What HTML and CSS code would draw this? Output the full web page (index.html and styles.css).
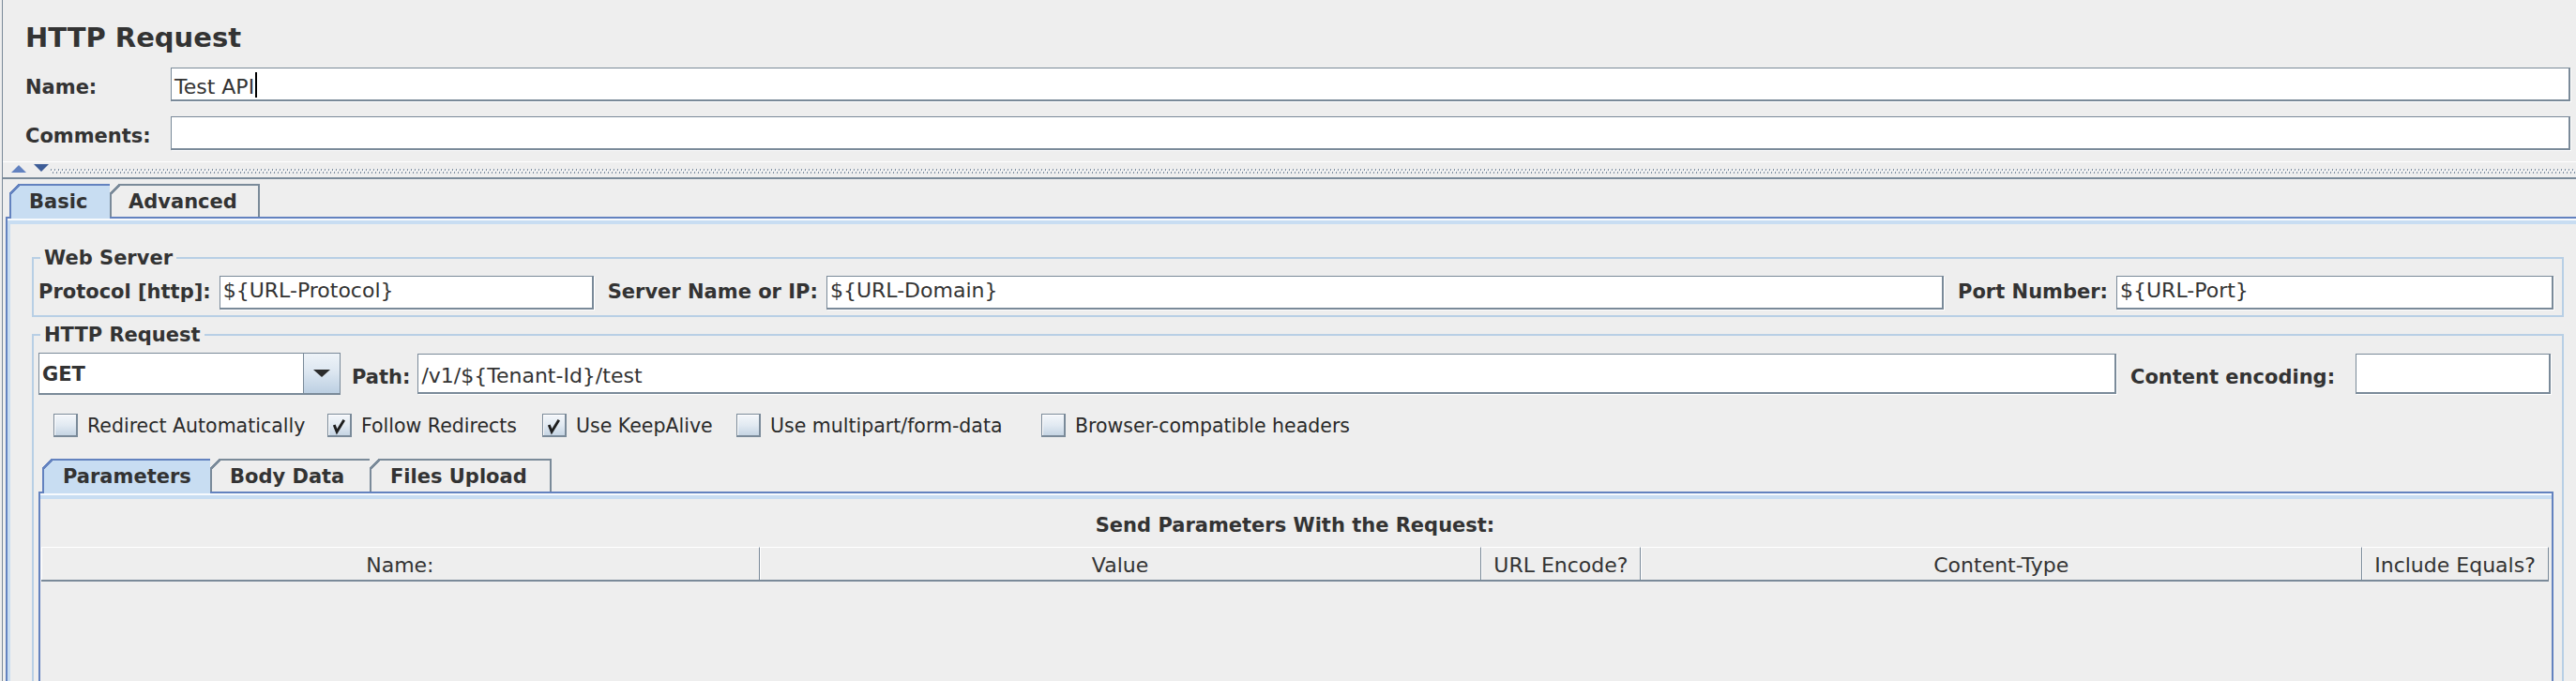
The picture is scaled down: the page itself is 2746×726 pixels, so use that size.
FILE: index.html
```html
<!DOCTYPE html>
<html>
<head>
<meta charset="utf-8">
<title>HTTP Request</title>
<link rel="stylesheet" href="styles.css">
</head>
<body>
<div class="page">
  <header class="head">
    <h1 class="title">HTTP Request</h1>
    <div class="form-row first">
      <span class="row-label">Name:</span>
      <div class="field name-field grow">Test API<span class="caret"></span></div>
    </div>
    <div class="form-row">
      <span class="row-label">Comments:</span>
      <div class="field name-field grow"></div>
    </div>
  </header>

  <div class="splitter">
    <span class="arrow-up"></span>
    <span class="arrow-down"></span>
    <span class="bumps"></span>
  </div>

  <div class="tabs outer-tabs">
    <div class="tab-strip">
      <div class="tab selected w-basic">Basic</div>
      <div class="tab w-advanced">Advanced</div>
    </div>
    <div class="tab-body outer-body">
      <fieldset class="group">
        <legend>Web Server</legend>
        <div class="grow-row ws-row">
          <span class="glabel">Protocol [http]:</span>
          <div class="field f-proto">${URL-Protocol}</div>
          <span class="glabel">Server Name or IP:</span>
          <div class="field grow">${URL-Domain}</div>
          <span class="glabel">Port Number:</span>
          <div class="field f-port">${URL-Port}</div>
        </div>
      </fieldset>

      <fieldset class="group tall">
        <legend>HTTP Request</legend>
        <div class="grow-row req-row">
          <div class="combo">
            <div class="combo-value">GET</div>
            <div class="combo-btn"><span class="combo-arrow"></span></div>
          </div>
          <span class="glabel path-label">Path:</span>
          <div class="field tall-field grow">/v1/${Tenant-Id}/test</div>
          <span class="glabel enc-label">Content encoding:</span>
          <div class="field tall-field f-enc"></div>
        </div>

        <div class="checks">
          <label class="check"><span class="box"></span><span class="ctext c-redirect">Redirect Automatically</span></label>
          <label class="check"><span class="box"><svg class="tick" viewBox="0 0 24 23" width="24" height="23"><path d="M6.5 11 L9.5 18.5 L17.5 5.5"/></svg></span><span class="ctext c-follow">Follow Redirects</span></label>
          <label class="check"><span class="box"><svg class="tick" viewBox="0 0 24 23" width="24" height="23"><path d="M6.5 11 L9.5 18.5 L17.5 5.5"/></svg></span><span class="ctext c-keep">Use KeepAlive</span></label>
          <label class="check"><span class="box"></span><span class="ctext c-multi">Use multipart/form-data</span></label>
          <label class="check"><span class="box"></span><span class="ctext c-browser">Browser-compatible headers</span></label>
        </div>

        <div class="tabs inner-tabs">
          <div class="tab-strip">
            <div class="tab selected w-params">Parameters</div>
            <div class="tab w-body">Body Data</div>
            <div class="tab w-files">Files Upload</div>
          </div>
          <div class="tab-body inner-body">
            <div class="params-title">Send Parameters With the Request:</div>
            <div class="param-head">
              <div>Name:</div>
              <div>Value</div>
              <div>URL Encode?</div>
              <div>Content-Type</div>
              <div>Include Equals?</div>
            </div>
          </div>
        </div>
      </fieldset>
    </div>
  </div>
</div>
</body>
</html>
```
FILE: styles.css
```css
* { box-sizing: border-box; }
html, body { margin: 0; padding: 0; }
body {
  width: 2746px;
  height: 726px;
  overflow: hidden;
  background: #eeeeee;
  font-family: "DejaVu Sans", "Liberation Sans", sans-serif;
  color: #333333;
}
.page {
  margin-left: 2px;
  border-left: 1px solid #7a8a99;
  height: 726px;
  overflow: hidden;
}

/* header */
.head { padding: 0 6px 0 24px; }
.title {
  margin: 0;
  padding-top: 23px;
  font-size: 29px;
  line-height: 34px;
  font-weight: bold;
}
.form-row { display: flex; align-items: center; margin-top: 16px; }
.form-row.first { margin-top: 15px; }
.row-label {
  width: 155px;
  flex: none;
  font-size: 21px;
  font-weight: bold;
  line-height: 22px;
  padding-top: 6px;
}

/* text fields */
.field {
  height: 36px;
  background: #ffffff;
  border-style: solid;
  border-color: #7a8a99;
  border-width: 1px 2px 2px 1px;
  box-shadow: 1px 1px 0 #ffffff;
  padding: 0 0 0 3px;
  font-size: 22px;
  line-height: 29px;
  white-space: nowrap;
  overflow: hidden;
  flex: none;
}
.name-field { padding-top: 4px; }
.grow { flex: 1 1 auto; min-width: 0; }
.caret {
  display: inline-block;
  width: 0;
  height: 27px;
  border-left: 2px solid #000;
  vertical-align: -4px;
  margin-left: 1px;
}

/* splitter */
.splitter {
  display: flex;
  align-items: flex-start;
  margin-top: 12px;
  height: 19px;
  border-top: 1px solid #ffffff;
  border-bottom: 2px solid #7a8a99;
  padding-top: 2px;
}
.arrow-up {
  margin-left: 9px;
  width: 0; height: 0;
  border-left: 8px solid transparent;
  border-right: 8px solid transparent;
  border-bottom: 8px solid #6282c0;
  margin-top: 1px;
}
.arrow-down {
  margin-left: 8px;
  width: 0; height: 0;
  border-left: 8px solid transparent;
  border-right: 8px solid transparent;
  border-top: 8px solid #3e5d97;
}
.bumps {
  flex: 1;
  height: 6px;
  margin: 5px 0 0 2px;
  background-image:
    linear-gradient(90deg, #7f90a3 0 1px, transparent 1px),
    linear-gradient(90deg, #7f90a3 0 1px, transparent 1px),
    linear-gradient(90deg, #ffffff 0 1px, transparent 1px);
  background-size: 4px 2px, 4px 2px, 4px 2px;
  background-position: 0 0, 2px 3px, 1px 1px;
  background-repeat: repeat-x;
}

/* tabs */
.outer-tabs { margin: 5px 0 0 3px; }
.tab-strip {
  display: flex;
  align-items: flex-start;
  height: 35px;
  padding-left: 4px;
}
.tab {
  position: relative;
  height: 35px;
  border-style: solid;
  border-color: #7a8a99;
  border-width: 2px 0 0 2px;
  padding: 1px 0 0 19px;
  font-size: 21px;
  font-weight: bold;
  line-height: 32px;
  white-space: nowrap;
  flex: none;
}
.tab:last-child { border-right-width: 2px; }
.tab::before {
  content: "";
  position: absolute;
  top: -2px;
  left: -2px;
  width: 11px;
  height: 11px;
  background: linear-gradient(to bottom right, #eeeeee 0 44%, #7a8a99 44% 60%, transparent 60%);
}
.tab.selected {
  background: #c8ddf2;
  border-color: #6382bf;
  height: 37px;
  z-index: 1;
}
.tab.selected::before {
  background: linear-gradient(to bottom right, #eeeeee 0 44%, #6382bf 44% 60%, transparent 60%);
}
.w-basic { width: 107px; padding-left: 19px; }
.w-advanced { width: 160px; padding-left: 18px; }
.w-params { width: 179px; padding-left: 20px; }
.w-body { width: 170px; padding-left: 19px; }
.w-files { width: 194px; padding-left: 20px; }

.tab-body {
  border-top: 2px solid #6382bf;
  border-left: 2px solid #6382bf;
  box-shadow: inset 0 2px 0 #f7fafd, inset 0 6px 0 #c8ddf2;
}
.outer-body {
  padding: 31px 13px 0 26px;
  height: 560px;
  box-shadow: inset 0 2px 0 #f7fafd, inset 0 6px 0 #c8ddf2, inset 3px 0 0 #c8ddf2;
}

/* group boxes */
.group {
  margin: 0;
  min-width: 0;
  border: 2px solid #b8cfe5;
  padding: 8px 9px 6px 5px;
}
.group legend {
  margin-left: 2px;
  padding: 0 4px;
  font-size: 21px;
  font-weight: bold;
  line-height: 22px;
}
.group + .group { margin-top: 8px; }
.group.tall { height: 420px; }

.grow-row { display: flex; align-items: center; }
.glabel {
  flex: none;
  font-size: 21px;
  font-weight: bold;
  line-height: 22px;
  margin-right: 9px;
  white-space: nowrap;
}
.field + .glabel { margin-left: 15px; }
.ws-row .glabel { padding-bottom: 2px; }
.f-proto { width: 399px; }
.f-port { width: 466px; }

/* request row */
.req-row { height: 45px; }
.req-row .glabel { padding-top: 6px; }
.combo { display: flex; width: 322px; height: 45px; flex: none; }
.combo-value {
  flex: 1;
  background: #ffffff;
  border-style: solid;
  border-color: #7a8a99;
  border-width: 1px 0 2px 1px;
  padding: 2px 0 0 3px;
  font-size: 21px;
  font-weight: bold;
  line-height: 40px;
}
.combo-btn {
  width: 40px;
  border: 1px solid #7a8a99;
  border-bottom-width: 2px;
  background: linear-gradient(#eef3f8, #dde7f1 45%, #bccfe2);
  display: flex;
  align-items: center;
  justify-content: center;
}
.combo-arrow {
  width: 0; height: 0;
  border-left: 9px solid transparent;
  border-right: 9px solid transparent;
  border-top: 8px solid #2b2b2b;
}
.path-label { margin-left: 12px; margin-right: 8px; }
.tall-field { height: 43px; padding-top: 8px; }
.enc-label { width: 229px; margin-left: 11px; margin-right: 11px; }
.f-enc { width: 208px; margin-right: 3px; }

/* checkboxes */
.checks {
  display: flex;
  gap: 26px;
  padding-left: 16px;
  margin-top: 20px;
  height: 25px;
}
.check {
  display: flex;
  align-items: center;
  gap: 10px;
  font-size: 20.5px;
  line-height: 22px;
  color: #2a2a2a;
  white-space: nowrap;
}
.ctext { display: block; }
.c-redirect { width: 230px; }
.c-follow { width: 167px; }
.c-keep { width: 145px; }
.c-multi { width: 263px; }
.c-browser { width: 303px; }
.box {
  width: 26px;
  height: 25px;
  flex: none;
  border: 1px solid #7a8a99;
  border-width: 1px 2px 2px 1px;
  background: linear-gradient(#f4f7fa, #e2eaf2 50%, #c6d5e4);
  box-shadow: inset 1px 1px 0 #ffffff;
  display: flex;
  align-items: center;
  justify-content: center;
}
.tick { display: block; }
.tick path { fill: none; stroke: #1e1e1e; stroke-width: 3; }

/* inner tabs */
.inner-tabs { margin-top: 23px; }
.inner-tabs .tab-strip { padding-left: 4px; }
.inner-body {
  border-right: 2px solid #6382bf;
  padding: 23px 3px 0 1px;
  height: 300px;
}
.params-title {
  text-align: center;
  font-size: 21px;
  font-weight: bold;
  line-height: 22px;
}
.param-head {
  display: grid;
  grid-template-columns: 766fr 770fr 170fr 769fr 199fr;
  margin-top: 12px;
}
.param-head > div {
  height: 37px;
  border-top: 1px solid #ffffff;
  border-bottom: 2px solid #7a8a99;
  border-right: 1px solid #7a8a99;
  box-shadow: inset 1px 0 0 #ffffff;
  padding-top: 3px;
  text-align: center;
  font-size: 22px;
  line-height: 31px;
  white-space: nowrap;
}
```
